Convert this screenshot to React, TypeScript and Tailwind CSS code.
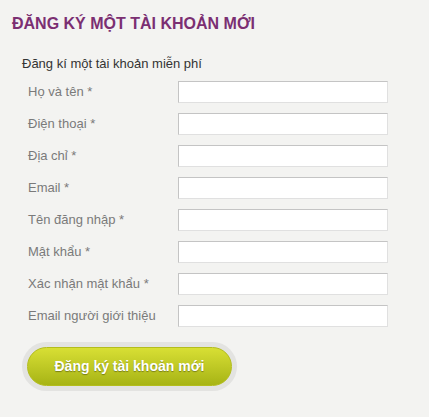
const fields = [
  'Họ và tên *',
  'Điện thoại *',
  'Địa chỉ *',
  'Email *',
  'Tên đăng nhập *',
  'Mật khẩu *',
  'Xác nhận mật khẩu *',
  'Email người giới thiệu',
];

export default function App() {
  return (
    <div className="min-h-[417px] w-[429px] bg-[#f3f3f1] font-['Liberation_Sans',Arial,sans-serif]">
      <h1 className="px-3 pt-[14px] text-[16px] font-bold leading-[20px] text-[#7b2f72]">
        ĐĂNG KÝ MỘT TÀI KHOẢN MỚI
      </h1>
      <form className="pl-[22px] pt-[21px]" onSubmit={(e) => e.preventDefault()}>
        <p className="text-[13px] leading-[18px] text-[#333]">Đăng kí một tài khoản miễn phí</p>
        <div className="mt-[8px] flex flex-col gap-[10px]">
          {fields.map((label) => (
            <div key={label} className="flex items-center">
              <label className="w-[156px] pl-[6px] text-[13px] text-[#7a7a7a]">{label}</label>
              <input
                type="text"
                className="h-[22px] w-[210px] border border-t-[#c4c4c4] border-l-[#c4c4c4] border-b-[#e0e0e0] border-r-[#e0e0e0] bg-white outline-none"
              />
            </div>
          ))}
        </div>
        <div className="mt-[15px] inline-flex rounded-full bg-[#e3e3e1] p-[5px]">
          <button
            type="submit"
            className="h-[39px] w-[205px] rounded-full border border-[#b3bd1c] bg-gradient-to-b from-[#d8df34] to-[#a7b414] text-[14px] font-bold text-white [text-shadow:0_1px_1px_rgba(0,0,0,0.35)]"
          >
            Đăng ký tài khoản mới
          </button>
        </div>
      </form>
    </div>
  );
}
